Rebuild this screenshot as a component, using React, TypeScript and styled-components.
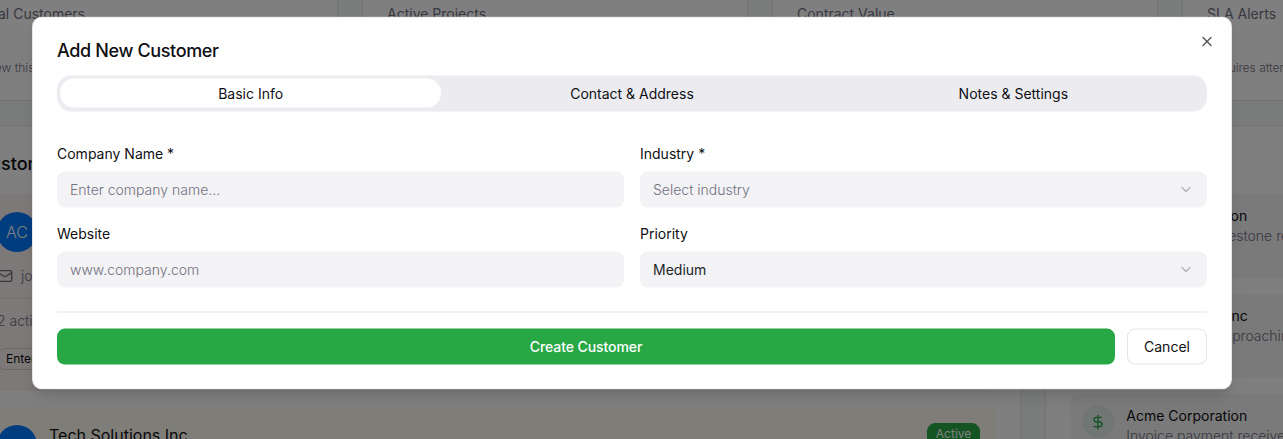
import React from "react";
import styled, { createGlobalStyle } from "styled-components";
import { ChevronDown, DollarSign, Mail, X } from "lucide-react";

const GlobalStyle = createGlobalStyle`
  *, *::before, *::after { box-sizing: border-box; }
  html, body { margin: 0; height: 100%; overflow: hidden; }
  body {
    font-family: Inter, "Liberation Sans", sans-serif;
    font-size: 14px;
    line-height: 20px;
    color: #0f0f14;
    background: #f5f9f8;
  }
  button, input { font: inherit; color: inherit; }
`;

const Screen = styled.div`
  position: relative;
  height: 439px;
  overflow: hidden;
`;

const Page = styled.main`
  width: 1616px;
  margin-left: -48px;
  display: flex;
  flex-direction: column;
  gap: 24px;
`;

const Card = styled.section`
  background: #fff;
  border: 1px solid #e2e5e4;
`;

const Stats = styled.div`
  display: grid;
  grid-template-columns: repeat(4, 1fr);
  gap: 24px;
`;

const StatCard = styled(Card)`
  height: 101px;
  border-top: 0;
  padding: 4px 24px;
  display: flex;
  flex-direction: column;
  gap: 36px;
`;

const StatLabel = styled.div`
  color: #717182;
`;

const StatNote = styled.div`
  font-size: 12px;
  line-height: 16px;
  font-weight: 300;
  color: #717182;
`;

const Columns = styled.div`
  display: grid;
  grid-template-columns: repeat(3, 1fr);
  gap: 24px;
`;

const Panel = styled(Card)<{ $wide?: boolean }>`
  grid-column: span ${(p) => (p.$wide ? 2 : 1)};
  padding: 24px;
  min-width: 0;
`;

const PanelTitle = styled.h2`
  margin: 0 0 16px;
  height: 28px;
  font-size: 18px;
  line-height: 28px;
  font-weight: 500;
`;

const List = styled.div`
  display: flex;
  flex-direction: column;
  gap: 16px;
`;

const CustomerItem = styled.article<{ $tint: string }>`
  height: 197px;
  padding: 16px 16px 16px 20px;
  border-radius: 8px;
  background: ${(p) => p.$tint};
`;

const CustomerHead = styled.div`
  display: flex;
  align-items: center;
  gap: 12px;
  height: 44px;
`;

const Avatar = styled.div`
  width: 40px;
  height: 40px;
  border-radius: 50%;
  background: #007bff;
  color: #fff;
  font-size: 16px;
  font-weight: 300;
  display: grid;
  place-items: center;
`;

const CustomerName = styled.div`
  flex: 1;
  align-self: flex-start;
  font-size: 16px;
  line-height: 24px;
`;

const Tag = styled.span<{ $solid?: boolean }>`
  display: inline-flex;
  align-items: center;
  align-self: flex-start;
  height: 22px;
  padding: 0 8px;
  border: 1px solid ${(p) => (p.$solid ? "#28a745" : "#d4d4d4")};
  border-radius: 8px;
  font-size: 12px;
  background: ${(p) => (p.$solid ? "#28a745" : "transparent")};
  color: ${(p) => (p.$solid ? "#fff" : "#0f0f14")};
`;

const Contact = styled.div`
  display: flex;
  align-items: center;
  gap: 8px;
  margin-top: 12px;
  font-weight: 300;
  color: #717182;
`;

const Activity = styled.div`
  margin: 12px 0 17px;
  padding-top: 12px;
  border-top: 1px solid #e8e4e2;
  font-weight: 300;
  color: #717182;
`;

const AlertItem = styled.article`
  display: flex;
  gap: 12px;
  height: 84px;
  padding: 12px;
  border-radius: 8px;
  background: #f4f4f5;
`;

const AlertIcon = styled.div`
  width: 32px;
  height: 32px;
  border-radius: 50%;
  display: grid;
  place-items: center;
  background: #dfece6;
  color: #28a745;
`;

const AlertText = styled.div`
  flex: none;
  white-space: nowrap;
`;

const Muted = styled.div`
  font-weight: 300;
  color: #717182;
`;

const Backdrop = styled.div`
  position: absolute;
  inset: 0;
  background: rgba(0, 0, 0, 0.5);
`;

const Dialog = styled.div`
  position: absolute;
  top: 16px;
  left: 32px;
  width: 1200px;
  height: 373px;
  transform: translateY(0.55px);
  padding: 24px;
  background: #fff;
  border: 1px solid rgba(0, 0, 0, 0.1);
  border-radius: 10px;
  box-shadow: 0 10px 15px -3px rgba(0, 0, 0, 0.1), 0 4px 6px -4px rgba(0, 0, 0, 0.1);
`;

const Title = styled.h1`
  margin: 0 0 16px;
  font-size: 18px;
  line-height: 18px;
  font-weight: 500;
  letter-spacing: -0.36px;
`;

const Close = styled.button`
  position: absolute;
  top: 16px;
  right: 16px;
  width: 16px;
  height: 16px;
  padding: 0;
  border: 0;
  background: none;
  opacity: 0.7;
  display: grid;
`;

const Tabs = styled.div`
  display: grid;
  grid-template-columns: repeat(3, 1fr);
  height: 36px;
  padding: 3px;
  border-radius: 14px;
  background: #ececf0;
`;

const Tab = styled.button<{ $active?: boolean }>`
  border: 0;
  padding: 0;
  height: 29px;
  border-radius: 14px;
  font-weight: 400;
  background: ${(p) => (p.$active ? "#fff" : "transparent")};
`;

const Form = styled.div`
  display: grid;
  grid-template-columns: 1fr 1fr;
  gap: 16px;
  margin: 32px 0 24px;
`;

const Field = styled.label`
  display: flex;
  flex-direction: column;
  gap: 8px;
`;

const Input = styled.input`
  height: 36px;
  border: 0;
  outline: 0;
  padding: 0 13px 2px;
  border-radius: 8px;
  background: #f3f3f5;
  font-weight: 300;
  &::placeholder { color: #717182; opacity: 1; }
`;

const Select = styled.div<{ $empty?: boolean }>`
  height: 36px;
  padding: 0 13px;
  border-radius: 8px;
  background: #f3f3f5;
  display: flex;
  align-items: center;
  justify-content: space-between;
  font-weight: ${(p) => (p.$empty ? 300 : 400)};
  color: ${(p) => (p.$empty ? "#717182" : "#24242a")};
  svg { color: #717182; opacity: 0.5; }
`;

const Footer = styled.div`
  display: flex;
  gap: 12px;
  padding-top: 16px;
  border-top: 1px solid rgba(0, 0, 0, 0.1);
`;

const Button = styled.button<{ $primary?: boolean }>`
  height: 36px;
  padding: 0;
  border-radius: 8px;
  font-weight: ${(p) => (p.$primary ? 500 : 400)};
  letter-spacing: ${(p) => (p.$primary ? "-0.08px" : "0")};
  flex: ${(p) => (p.$primary ? "1" : "0 0 80px")};
  border: ${(p) => (p.$primary ? "0" : "1px solid rgba(0, 0, 0, 0.1)")};
  background: ${(p) => (p.$primary ? "#28a745" : "#fff")};
  color: ${(p) => (p.$primary ? "#fff" : "#0f0f14")};
`;

const stats = [
  { label: "Total Customers", note: "2 new this month" },
  { label: "Active Projects", note: "" },
  { label: "Contract Value", note: "" },
  { label: "SLA Alerts", note: "Requires attention" },
];

const customers = [
  { initials: "AC", name: "Acme Corporation", email: "john@acme.com", tint: "#f8f2f0" },
  { initials: "TS", name: "Tech Solutions Inc", email: "sarah@techsolutions.com", tint: "#fffbef" },
];

const alerts = [
  { name: "Acme Corporation", text: "Next project milestone reached" },
  { name: "Tech Solutions Inc", text: "SLA deadline approaching" },
  { name: "Acme Corporation", text: "Invoice payment received" },
];

export default function App() {
  return (
    <Screen>
      <GlobalStyle />
      <Page>
        <Stats>
          {stats.map((s) => (
            <StatCard key={s.label}>
              <StatLabel>{s.label}</StatLabel>
              <StatNote>{s.note}</StatNote>
            </StatCard>
          ))}
        </Stats>
        <Columns>
          <Panel $wide>
            <PanelTitle>Customers</PanelTitle>
            <List>
              {customers.map((c) => (
                <CustomerItem key={c.name} $tint={c.tint}>
                  <CustomerHead>
                    <Avatar>{c.initials}</Avatar>
                    <CustomerName>{c.name}</CustomerName>
                    <Tag $solid>Active</Tag>
                  </CustomerHead>
                  <Contact><Mail size={16} />{c.email}</Contact>
                  <Activity>2 active projects</Activity>
                  <Tag>Enterprise</Tag>
                </CustomerItem>
              ))}
            </List>
          </Panel>
          <Panel>
            <PanelTitle />
            <List>
              {alerts.map((a) => (
                <AlertItem key={a.text}>
                  <AlertIcon><DollarSign size={16} /></AlertIcon>
                  <AlertText>
                    <div>{a.name}</div>
                    <Muted>{a.text}</Muted>
                  </AlertText>
                </AlertItem>
              ))}
            </List>
          </Panel>
        </Columns>
      </Page>
      <Backdrop />
      <Dialog role="dialog">
        <Title>Add New Customer</Title>
        <Tabs>
          <Tab $active>Basic Info</Tab>
          <Tab>Contact &amp; Address</Tab>
          <Tab>Notes &amp; Settings</Tab>
        </Tabs>
        <Form>
          <Field>Company Name *<Input placeholder="Enter company name..." /></Field>
          <Field>Industry *<Select $empty>Select industry<ChevronDown size={16} /></Select></Field>
          <Field>Website<Input placeholder="www.company.com" /></Field>
          <Field>Priority<Select>Medium<ChevronDown size={16} /></Select></Field>
        </Form>
        <Footer>
          <Button $primary>Create Customer</Button>
          <Button>Cancel</Button>
        </Footer>
        <Close aria-label="Close"><X size={16} /></Close>
      </Dialog>
    </Screen>
  );
}
